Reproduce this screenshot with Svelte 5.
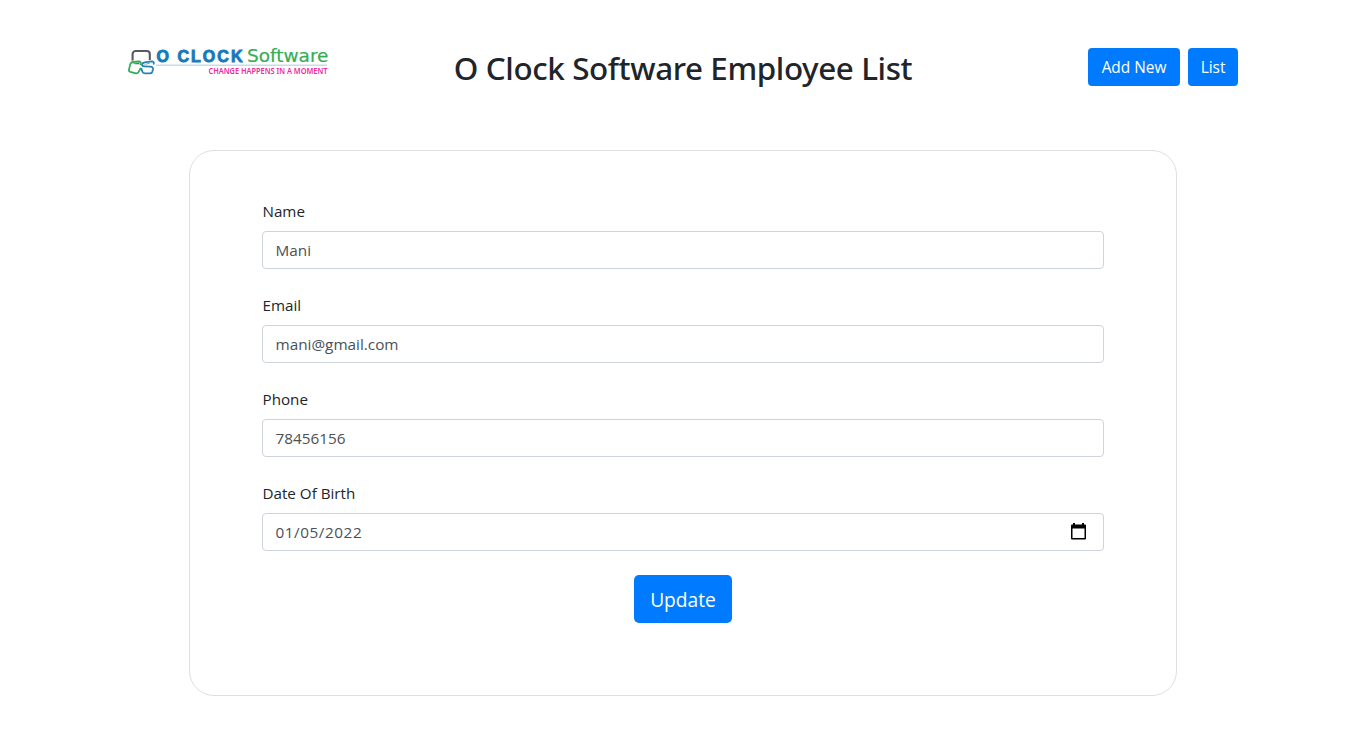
<script>
  let fields = $state([
    { id: 'name', label: 'Name', value: 'Mani' },
    { id: 'email', label: 'Email', value: 'mani@gmail.com' },
    { id: 'phone', label: 'Phone', value: '78456156' },
    { id: 'dob', label: 'Date Of Birth', value: '01/05/2022', calendar: true }
  ]);
</script>

<div class="page">
  <header>
    <svg class="logo" width="208" height="30" viewBox="0 0 208 30" role="img" aria-label="O Clock Software">
      <path d="M28 17.3H199" stroke="#c6dde8" stroke-width="1.4" />
      <g fill="none" stroke-linecap="round" stroke-linejoin="round">
        <rect x="4.6" y="3" width="17.2" height="12.2" rx="3" stroke="#555b5f" stroke-width="2.1" />
        <path d="M12.4 16.2Q13.3 13.6 11 13.5L5 14Q3 14.2 2.4 15.9L1 21.4Q.6 23.3 2.3 23.9L7.8 25.3Q9.6 25.7 10.5 24.1L12.5 20.5" stroke="#fff" stroke-width="3" />
        <path d="M25.7 15.8Q26.2 13.3 23.8 13.3L16.8 14.4Q13.8 15 14 17Q14.2 18.3 16.5 18.4L22.5 18.7Q25.5 19 25 21.3L24.4 23.6Q23.8 25.3 22 25.3H17Q14.8 25.2 14.3 23.4L13.3 20.6" stroke="#fff" stroke-width="3" />
        <path d="M12.4 16.2Q13.3 13.6 11 13.5L5 14Q3 14.2 2.4 15.9L1 21.4Q.6 23.3 2.3 23.9L7.8 25.3Q9.6 25.7 10.5 24.1L12.5 20.5" stroke="#35ad55" stroke-width="1.8" />
        <path d="M25.7 15.8Q26.2 13.3 23.8 13.3L16.8 14.4Q13.8 15 14 17Q14.2 18.3 16.5 18.4L22.5 18.7Q25.5 19 25 21.3L24.4 23.6Q23.8 25.3 22 25.3H17Q14.8 25.2 14.3 23.4L13.3 20.6" stroke="#2582b8" stroke-width="1.8" />
      </g>
      <text class="clock" x="28.5" y="14" textLength="86" lengthAdjust="spacing">O CLOCK</text>
      <text class="software" x="119" y="14" textLength="81.5" lengthAdjust="spacingAndGlyphs">Software</text>
      <text class="slogan" x="80.5" y="26" textLength="119" lengthAdjust="spacingAndGlyphs">CHANGE HAPPENS IN A MOMENT</text>
    </svg>
    <h1>O Clock Software Employee List</h1>
    <nav>
      <button class="btn add">Add New</button>
      <button class="btn list">List</button>
    </nav>
  </header>

  <form class="card" onsubmit={(event) => event.preventDefault()}>
    {#each fields as field (field.id)}
      <div class="group">
        <label for={field.id}>{field.label}</label>
        <div class="control">
          <input id={field.id} class:date={field.calendar} type="text" bind:value={field.value} />
          {#if field.calendar}
            <svg width="15" height="17" viewBox="0 0 15 17" aria-hidden="true">
              <path fill="#000" fill-rule="evenodd" d="M2 0H4V1.5H11V0H13V1.5H14Q15 1.5 15 2.5V15.5Q15 16.5 14 16.5H1Q0 16.5 0 15.5V2.5Q0 1.5 1 1.5H2ZM1.5 5.5V15H13.5V5.5Z" />
            </svg>
          {/if}
        </div>
      </div>
    {/each}
    <button class="btn update" type="submit">Update</button>
  </form>
</div>

<style>
  :global(body) {
    margin: 0;
    background: #fff;
  }

  .page {
    box-sizing: border-box;
    height: 735px;
    padding-top: 48px;
    overflow: hidden;
    font-family: "Open Sans", "Noto Sans", sans-serif;
    color: #212529;
  }

  header {
    display: grid;
    grid-template-columns: 1fr auto 1fr;
    width: 1110px;
    height: 102px;
    margin: 0 auto;
    align-items: start;
  }

  .logo {
    display: block;
    overflow: visible;
  }

  .clock {
    font: 700 16px "Liberation Sans", sans-serif;
    fill: #1679bb;
    stroke: #1679bb;
    stroke-width: 0.9;
  }

  .software {
    font: 400 17px "DejaVu Sans", sans-serif;
    fill: #35ad55;
    stroke: #35ad55;
    stroke-width: 0.2;
  }

  .slogan {
    font: 600 8.4px "Noto Sans", sans-serif;
    fill: #ed299b;
  }

  h1 {
    margin: -1px 0 0;
    font-family: "Noto Sans", sans-serif;
    font-size: 31.4px;
    font-weight: 500;
    line-height: 42px;
    letter-spacing: -0.4px;
    white-space: nowrap;
  }

  nav {
    display: flex;
    gap: 8px;
    justify-content: flex-end;
  }

  .btn {
    box-sizing: border-box;
    height: 38px;
    padding: 1px 0 0;
    border: 0;
    border-radius: 4px;
    background: #007bff;
    color: #fff;
    font-family: inherit;
    font-size: 15.4px;
    line-height: 37px;
    white-space: nowrap;
  }

  .add {
    width: 92px;
  }

  .list {
    width: 50px;
  }

  .card {
    box-sizing: border-box;
    display: flex;
    flex-direction: column;
    width: 988px;
    height: 546px;
    margin: 0 auto;
    padding: 48px 72px;
    border: 1px solid #dfdfdf;
    border-radius: 25px;
  }

  .group {
    margin-bottom: 24px;
  }

  label {
    display: block;
    margin-bottom: 8px;
    padding-left: 0.5px;
    font-size: 15.2px;
    line-height: 24px;
  }

  .control {
    box-sizing: border-box;
    display: flex;
    height: 38px;
    align-items: center;
    padding: 0 17px 0 12.5px;
    border: 1px solid #ced4da;
    border-radius: 4px;
  }

  input {
    flex: 1;
    min-width: 0;
    height: 36px;
    padding: 0;
    border: 0;
    outline: 0;
    background: transparent;
    color: #495057;
    font-family: inherit;
    font-size: 15.3px;
  }

  .date {
    letter-spacing: 0.55px;
  }

  .control svg {
    margin-top: -1px;
  }

  .update {
    align-self: center;
    width: 98px;
    height: 48px;
    border-radius: 5px;
    font-size: 19.2px;
    line-height: 47px;
  }
</style>
